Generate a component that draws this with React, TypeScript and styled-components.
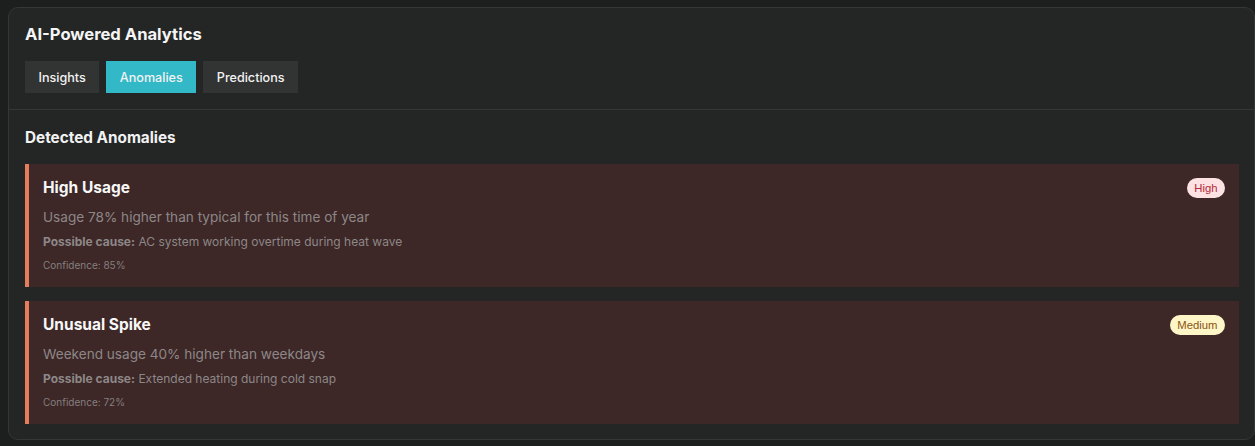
import React from "react";
import styled, { createGlobalStyle } from "styled-components";

const Global = createGlobalStyle`
  html, body { margin: 0; background: #1d1e1e; }
  body { padding: 7px 0 0 8px; font-family: Inter, "Liberation Sans", Arial, sans-serif; -webkit-font-smoothing: antialiased; }
  * { box-sizing: border-box; }
`;

const Card = styled.section`
  width: 1247px;
  height: 433px;
  background: #242626;
  border: 1px solid #343737;
  border-radius: 10px;
  overflow: hidden;
`;

const Header = styled.header`
  padding: 16px 16px 16px;
  border-bottom: 1px solid #343737;
`;

const Title = styled.h2`
  margin: 0 0 17px;
  font-size: 16.6px;
  line-height: 20px;
  font-weight: 700;
  color: #f5f5f5;
`;

const Tabs = styled.div`
  display: flex;
  gap: 7px;
`;

const Tab = styled.button<{ $active?: boolean }>`
  height: 32px;
  padding: 0 13.5px;
  border: none;
  border-radius: 0;
  font-family: inherit;
  font-size: 12.6px;
  font-weight: 500;
  color: #f2f2f2;
  background: ${(p) => (p.$active ? "#33b8c7" : "#323434")};
  cursor: pointer;
`;

const Body = styled.div`
  padding: 18px 15px 0 16px;
`;

const SectionTitle = styled.h3`
  margin: 0 0 16px;
  font-size: 15.3px;
  line-height: 20px;
  font-weight: 700;
  color: #f2f2f2;
`;

const List = styled.div`
  display: flex;
  flex-direction: column;
  gap: 14px;
`;

const Item = styled.article`
  background: #3d2727;
  border-left: 4px solid #e57c5c;
  padding: 14px;
  height: 123px;
`;

const ItemHead = styled.div`
  display: flex;
  justify-content: space-between;
  align-items: flex-start;
`;

const ItemTitle = styled.h4`
  margin: 0;
  font-size: 15.5px;
  line-height: 19px;
  font-weight: 700;
  color: #f7f7f7;
`;

const Badge = styled.span<{ $level: "high" | "medium" }>`
  padding: 3px 7.5px;
  border-radius: 10px;
  font-family: "Liberation Sans", Arial, sans-serif;
  font-size: 11.3px;
  line-height: 14px;
  background: ${(p) => (p.$level === "high" ? "#fde2e3" : "#fef6c7")};
  color: ${(p) => (p.$level === "high" ? "#b62a3a" : "#8a5412")};
`;

const Desc = styled.p`
  margin: 10px 0 0;
  font-size: 13.6px;
  line-height: 18px;
  color: #8d8888;
`;

const Cause = styled.p`
  margin: 8px 0 0;
  font-size: 12px;
  line-height: 16px;
  color: #8d8888;
  b { font-weight: 700; }
`;

const Confidence = styled.p`
  margin: 9px 0 0;
  font-size: 10px;
  line-height: 13px;
  color: #857f7f;
`;

const anomalies = [
  {
    title: "High Usage",
    level: "high" as const,
    label: "High",
    desc: "Usage 78% higher than typical for this time of year",
    cause: "AC system working overtime during heat wave",
    confidence: 85,
  },
  {
    title: "Unusual Spike",
    level: "medium" as const,
    label: "Medium",
    desc: "Weekend usage 40% higher than weekdays",
    cause: "Extended heating during cold snap",
    confidence: 72,
  },
];

export default function App() {
  return (
    <>
      <Global />
      <Card>
        <Header>
          <Title>AI-Powered Analytics</Title>
          <Tabs>
            <Tab>Insights</Tab>
            <Tab $active>Anomalies</Tab>
            <Tab>Predictions</Tab>
          </Tabs>
        </Header>
        <Body>
          <SectionTitle>Detected Anomalies</SectionTitle>
          <List>
            {anomalies.map((a) => (
              <Item key={a.title}>
                <ItemHead>
                  <ItemTitle>{a.title}</ItemTitle>
                  <Badge $level={a.level}>{a.label}</Badge>
                </ItemHead>
                <Desc>{a.desc}</Desc>
                <Cause>
                  <b>Possible cause:</b> {a.cause}
                </Cause>
                <Confidence>Confidence: {a.confidence}%</Confidence>
              </Item>
            ))}
          </List>
        </Body>
      </Card>
    </>
  );
}
